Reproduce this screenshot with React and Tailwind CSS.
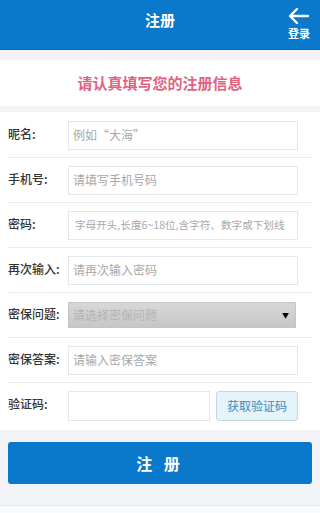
const font = { fontFamily: '"Noto Sans CJK SC", "Liberation Sans", sans-serif' };

const Row = ({ label, children, last }) => (
  <div className={`flex items-center mx-2 h-[45px] ${last ? '' : 'border-b border-[#e8ebef]'}`}>
    <div className="w-[60px] shrink-0 text-[12px] font-medium text-[#333] -mt-[3px]">{label}</div>
    {children}
  </div>
);

const Field = ({ placeholder, small }) => (
  <div
    className={`w-[230px] h-[29px] border border-[#e3e6ea] bg-white flex items-center overflow-hidden whitespace-nowrap text-[#a8a8a8] ${
      small ? 'px-[6px] text-[10.6px]' : 'px-[4px] text-[12px]'
    }`}>
    {placeholder}
  </div>
);

export default function App() {
  return (
    <div className="w-[320px] h-[513px] bg-[#f1f3f6] flex flex-col overflow-hidden" style={font}>
      <div className="h-[50px] bg-[#0a79cc] border-b border-[#0a63a8] flex items-start justify-center pt-[9px] relative shrink-0">
        <span className="text-white text-[15px] font-bold">注册</span>
        <div className="absolute right-[10px] top-[7px] flex flex-col items-center">
          <svg width="22" height="18" viewBox="0 0 22 18" fill="none" stroke="white" strokeWidth="2.4" strokeLinecap="round" strokeLinejoin="round">
            <path d="M20 9H3M9 2L2 9l7 7" />
          </svg>
          <span className="text-white text-[11px] font-bold leading-[14px] mt-[1px]">登录</span>
        </div>
      </div>
      <div className="h-[10px] shrink-0" />
      <div className="h-[46px] bg-white flex items-center justify-center shrink-0">
        <span className="text-[#e2627f] text-[15px] font-bold">请认真填写您的注册信息</span>
      </div>
      <div className="h-[6px] shrink-0" />
      <div className="bg-white pt-[1px] pb-[2px] shrink-0">
        <Row label="昵名:">
          <Field placeholder="例如“大海”" />
        </Row>
        <Row label="手机号:">
          <Field placeholder="请填写手机号码" />
        </Row>
        <Row label="密码:">
          <Field small placeholder="字母开头,长度6~18位,含字符、数字或下划线" />
        </Row>
        <Row label="再次输入:">
          <Field placeholder="请再次输入密码" />
        </Row>
        <Row label="密保问题:">
          <div className="w-[228px] h-[26px] bg-gradient-to-b from-[#d8d8d8] to-[#c6c6c6] border border-[#c4c4c4] flex items-center justify-between px-[4px] text-[12px] text-[#b4b4b4]">
            <span>请选择密保问题</span>
            <span className="text-[7px] text-black mr-[2px]">▼</span>
          </div>
        </Row>
        <Row label="密保答案:">
          <Field placeholder="请输入密保答案" />
        </Row>
        <Row label="验证码:" last>
          <div className="w-[142px] h-[30px] border border-[#e3e6ea] bg-white" />
          <div className="ml-[6px] w-[82px] h-[30px] rounded-[3px] border border-[#c9d5de] bg-[#e5f3fa] flex items-center justify-center text-[12px] text-[#3a8dbd]">
            获取验证码
          </div>
        </Row>
      </div>
      <div className="px-2 pt-[12px]">
        <div className="h-[42px] bg-[#0a79cc] rounded-[3px] flex items-center justify-center text-white text-[16px] font-bold tracking-[4px]">
          注 册
        </div>
      </div>
      <div className="flex-1" />
      <div className="h-[8px] bg-[#fafbfc] border-t border-[#e6e8eb] shrink-0" />
    </div>
  );
}
